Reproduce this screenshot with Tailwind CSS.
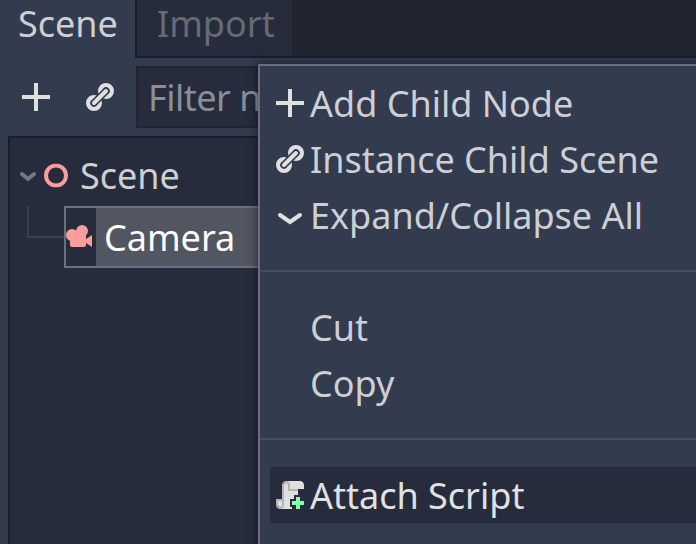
<!DOCTYPE html>
<html lang="en">
<head>
<meta charset="utf-8">
<title>Scene dock</title>
<script src="https://cdn.jsdelivr.net/npm/@tailwindcss/browser@4"></script>
</head>
<body class="relative h-[544px] w-[696px] overflow-hidden bg-[#333b4f] font-['Noto_Sans',sans-serif] text-[36px] leading-[58px] whitespace-nowrap text-[#cccfd3]">
<svg class="hidden">
  <symbol id="add" viewBox="0 0 16 16"><path d="M7 1h2v6h6v2H9v6H7V9H1V7h6z" fill="#e0e0e0"/></symbol>
  <symbol id="link" viewBox="0 0 16 16" fill="none" stroke-linecap="round">
    <circle cx="11" cy="5" r="2.85" stroke="#e0e0e0" stroke-width="2.3"/>
    <circle cx="5" cy="11" r="2.85" stroke="#e0e0e0" stroke-width="2.3"/>
    <path d="M5 11l6-6" stroke="#333b4f" stroke-width="3.7"/>
    <path d="M5 11l6-6" stroke="#e0e0e0" stroke-width="2"/>
  </symbol>
</svg>

<div class="flex h-[58px]">
  <div class="w-[135px] pl-[18px] leading-[47px]">Scene</div>
  <div class="flex flex-1 border-b-2 border-l-2 border-[#1a1e28] bg-[#212530]">
    <div class="w-[155px] bg-[#262c3b] pl-5 leading-[47px] text-[#666a75]">Import</div>
  </div>
</div>

<div class="flex pt-2">
  <div class="flex w-[136px] gap-8 pt-[15px] pl-5">
    <svg class="size-8"><use href="#add"/></svg>
    <svg class="size-8"><use href="#link"/></svg>
  </div>
  <div class="h-[62px] flex-1 border-2 border-[#212530] bg-[#262c3b] pl-[10px] leading-[60px] tracking-[-0.5px] text-[#8a8e97]">Filter n</div>
</div>

<div class="mt-2 ml-2 h-[420px] border-2 border-[#1a1e28] bg-[#262c3b] pt-[9px]">
  <div class="flex h-[59px] items-center pl-[10px]">
    <svg class="h-4 w-4" viewBox="0 0 16 16"><path d="M2 5l6 5 6-5" fill="none" stroke="#767a84" stroke-width="4" stroke-linecap="round"/></svg>
    <svg class="ml-2 size-6 -translate-y-[1.5px]" viewBox="0 0 24 24"><circle cx="12" cy="12" r="10" fill="none" stroke="#fc9c9c" stroke-width="4"/></svg>
    <div class="ml-3 pb-[2px] leading-[56px]">Scene</div>
  </div>
  <div class="flex h-[62px] pl-[17px]">
    <div class="h-8 w-[37px] border-b-2 border-l-2 border-[#3b404e]"></div>
    <div class="flex flex-1 border-2 border-[#6b7080]">
      <svg class="h-[58px] w-[30px]" viewBox="0 0 30 58"><path transform="translate(-4 15) scale(2)" d="M10 1a3 3 0 0 0-2.95 2.8A3 3 0 0 0 5 3a3 3 0 0 0-3 3 3 3 0 0 0 2 2.83V11c0 .55.45 1 1 1h6c.55 0 1-.45 1-1v-1l3 2V6l-3 2V6.23A3 3 0 0 0 13 4a3 3 0 0 0-3-3z" fill="#fc9c9c"/></svg>
      <div class="flex-1 bg-[#525661] pl-2 leading-[60px] text-white">Camera</div>
    </div>
  </div>
</div>

<!-- Context menu -->
<div class="absolute top-[64px] left-[258px] h-[500px] w-[460px] border-2 border-[#6b7080] bg-[#333b4f] pt-[9px] pl-[10px] shadow-[0_0_10px_rgba(0,0,0,0.55)]">
  <div class="flex h-14 gap-1 pl-1"><svg class="mt-3 size-8"><use href="#add"/></svg><span>Add Child Node</span></div>
  <div class="flex h-14 gap-1 pl-1"><svg class="mt-3 size-8"><use href="#link"/></svg><span>Instance Child Scene</span></div>
  <div class="flex h-14 gap-1 pl-1"><svg class="mt-3 size-8" viewBox="0 0 16 16"><path d="M3 8l5 3.5L13 8" fill="none" stroke="#e0e0e0" stroke-width="2" stroke-linecap="round"/></svg><span>Expand/Collapse All</span></div>
  <div class="-ml-[10px] flex h-14 items-center"><div class="h-[2px] w-full bg-[#474d60]"></div></div>
  <div class="h-14 pl-10">Cut</div>
  <div class="h-14 pl-10">Copy</div>
  <div class="-ml-[10px] flex h-14 items-center"><div class="h-[2px] w-full bg-[#474d60]"></div></div>
  <div class="flex h-14 gap-1 bg-[#262c3b] pl-1 text-[#e0e1e4]">
    <svg class="mt-3 size-8" viewBox="0 0 16 16">
      <path d="M6 1v1c-.55 0-1 .45-1 1v10H4v-2H2v2c0 .55.45 1 1 1v1h6v-1H8v-4h2V8h2V5h3V3c0-1.1-.9-2-2-2z" fill="#e0e0e0"/>
      <path d="M6 1c-1.1 0-2 .9-2 2v7H1v3c0 1.1.9 2 2 2s2-.9 2-2V3c0-.55.45-1 1-1s1 .45 1 1v3h5V5H8V3c0-1.1-.9-2-2-2zM2 11h2v2c0 .55-.45 1-1 1s-1-.45-1-1z" fill="#b4b4b4"/>
      <path d="M11 9h2v2h2v2h-2v2h-2v-2H9v-2h2z" fill="#84ffb1"/>
    </svg>
    <span>Attach Script</span>
  </div>
</div>
</body>
</html>
